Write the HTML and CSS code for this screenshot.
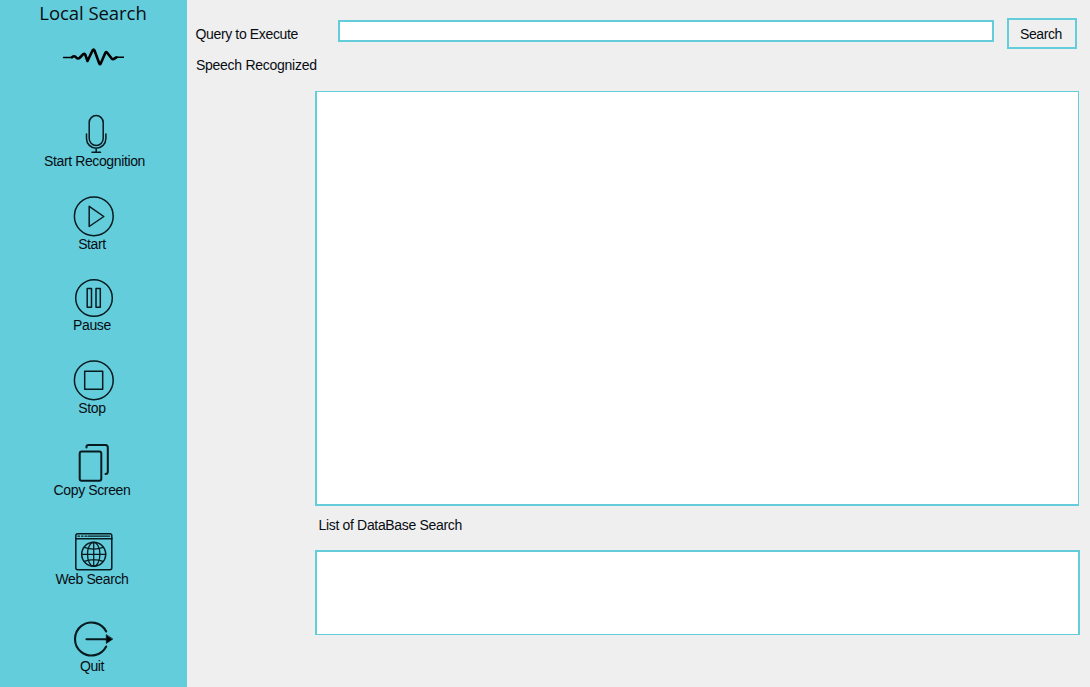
FILE: index.html
```html
<!DOCTYPE html>
<html lang="en">
<head>
<meta charset="utf-8">
<title>Local Search</title>
<link rel="stylesheet" href="styles.css">
</head>
<body>
<div class="app">
  <aside class="sidebar">
    <h1 class="brand">Local Search</h1>
    <svg class="wave" viewBox="60 46 64 24" fill="none" stroke="#000" stroke-linecap="round" stroke-linejoin="round">
      <path d="M63.500 57.500H72M116 57.300H124" stroke-width="1.400"/>
      <path d="M72 57.200Q74.500 55.200 76.200 57.500Q78 59.600 80 57.500L83 54.300Q84.500 53 85.200 54.500L87.500 61L92.500 50.500Q93.700 48.500 94.500 50.500L99.300 63.500Q100 65 100.700 63.500L105.500 52.500Q106.300 51.500 107.200 52.800L111.500 58.300Q113 59.800 114.500 58.500L116.500 57.400" stroke-width="2.600"/>
    </svg>
    <nav class="menu">
      <button class="item item-record">
        <svg class="icon" viewBox="62 111 60 42"><rect x="89.200" y="115.600" width="14" height="30" rx="7" stroke-width="1.500"/><path d="M86.500 134v4.500a9.700 9.700 0 0 0 19.400 0V134M96.200 148.200V152M92 152.200h8.500" stroke-width="1.500"/></svg>
        <span class="label">Start Recognition</span>
      </button>
      <button class="item">
        <svg class="icon" viewBox="62 194 60 42"><circle cx="93.800" cy="216.300" r="19.400"/><path d="M89.200 206.300V226.500L103.800 216.500Z"/></svg>
        <span class="label">Start</span>
      </button>
      <button class="item">
        <svg class="icon" viewBox="62 275 60 42"><circle cx="94" cy="298" r="18.300"/><path d="M87.200 288.500h4.300v18.800h-4.300zM96 288.500h4.300v18.800H96z" stroke-width="1.500"/></svg>
        <span class="label">Pause</span>
      </button>
      <button class="item">
        <svg class="icon" viewBox="62 358 60 42"><circle cx="93.800" cy="380.300" r="19.400"/><path d="M84.700 371.300h18v18h-18z" stroke-width="1.500"/></svg>
        <span class="label">Stop</span>
      </button>
      <button class="item">
        <svg class="icon" viewBox="62 440 60 42"><rect x="79.700" y="451.500" width="21.600" height="29.200" rx="2" stroke-width="2"/><path d="M86.500 447.500V446.500Q86.500 445 88.500 445H105.500Q107.800 445 107.800 447.500V471.500Q107.800 474 105.500 474" stroke-width="2"/></svg>
        <span class="label">Copy Screen</span>
      </button>
      <button class="item">
        <svg class="icon" viewBox="62 529 60 42"><rect x="75.800" y="533.700" width="36" height="36" rx="2" stroke-width="1.500"/><path d="M76 538.800H112" stroke-width="1.500"/><path d="M78 536.200h1.500M81.500 536.200H83M85 536.200h1.500M88 536.200H109.500" stroke-width="1.300"/><circle cx="93.700" cy="554.300" r="12" stroke-width="1.500"/><ellipse cx="93.700" cy="554.300" rx="6.200" ry="12" stroke-width="1.300"/><path d="M93.700 542.300V566.300M81.700 554.300H105.700M84.300 547.300Q93.700 550.800 103.100 547.300M84.300 561.300Q93.700 557.800 103.100 561.300" stroke-width="1.300"/></svg>
        <span class="label">Web Search</span>
      </button>
      <button class="item">
        <svg class="icon" viewBox="62 616 60 42"><path d="M106.200 631.500A16.500 16.500 0 1 0 106.200 646.500M86.500 639.200H107" stroke-width="2.100"/><path d="M106.300 635V643.400L112.500 639.200Z" fill="#000" stroke-width=".8"/></svg>
        <span class="label">Quit</span>
      </button>
    </nav>
  </aside>
  <main class="main">
    <form class="query">
      <label class="query-label" for="query">Query to Execute</label>
      <input class="query-input" id="query" type="text">
      <button class="search" type="button">Search</button>
    </form>
    <p class="speech-label">Speech Recognized</p>
    <section class="speech-box"></section>
    <h2 class="list-label">List of DataBase Search</h2>
    <section class="list-box"></section>
  </main>
</div>
</body>
</html>
```

FILE: styles.css
```css
* { box-sizing: border-box; }
body {
  margin: 0;
  background: #efefef;
  color: #080c12;
  font: 14px/16px "Liberation Sans", Arial, sans-serif;
}
button { font: inherit; color: inherit; }
.app { display: flex; width: 1090px; height: 687px; overflow: hidden; }
.sidebar {
  flex: none;
  display: flex;
  flex-direction: column;
  align-items: center;
  width: 187px;
  padding-right: 3px;
  background: #64cddb;
}
.brand {
  margin: 1px 0 1px 2px;
  font: 400 18.5px/24px "Open Sans", "Noto Sans", sans-serif;
  letter-spacing: -0.05px;
  white-space: nowrap;
}
.wave { width: 64px; height: 24px; margin: 20px 0 41px; }
.menu {
  display: grid;
  grid-template-rows: 83px 81px 83px 82px 89px 87px 58px;
  justify-items: center;
}
.item {
  display: flex;
  flex-direction: column;
  align-items: center;
  height: 58px;
  padding: 0;
  border: 0;
  background: none;
}
.item-record .label { padding-left: 5px; }
.icon {
  width: 60px;
  height: 42px;
  overflow: visible;
  fill: none;
  stroke: #061a20;
  stroke-width: 1.5;
  stroke-linecap: round;
  stroke-linejoin: round;
}
.label { white-space: nowrap; letter-spacing: -0.38px; }
.main { flex: 1; padding: 18px 10.5px 0 8.5px; }
.query { display: flex; align-items: flex-start; height: 31px; }
.query-label { width: 142px; padding-top: 8px; letter-spacing: -0.36px; }
.query-input {
  width: 656.5px;
  height: 22px;
  margin: 2px 13px 0 0;
  padding: 0 4px;
  border: 2px solid #64cddb;
  background: #fff;
  font: inherit;
}
.search {
  width: 70px;
  height: 31px;
  padding: 0 2px 0 0;
  border: 2px solid #64cddb;
  background: #efefef;
  letter-spacing: -0.4px;
}
.speech-label { margin: 8px 0 0 0.5px; letter-spacing: -0.27px; }
.speech-box, .list-box {
  margin-left: 119.5px;
  border: solid #64cddb;
  background: #fff;
}
.speech-box { width: 764px; height: 415px; margin-top: 18px; border-width: 1px 1px 2px 2px; }
.list-label { margin: 11px 0 0 123px; font: inherit; letter-spacing: -0.33px; }
.list-box { width: 765px; height: 85px; margin-top: 17px; border-width: 2px 2px 1px 2px; }
```
